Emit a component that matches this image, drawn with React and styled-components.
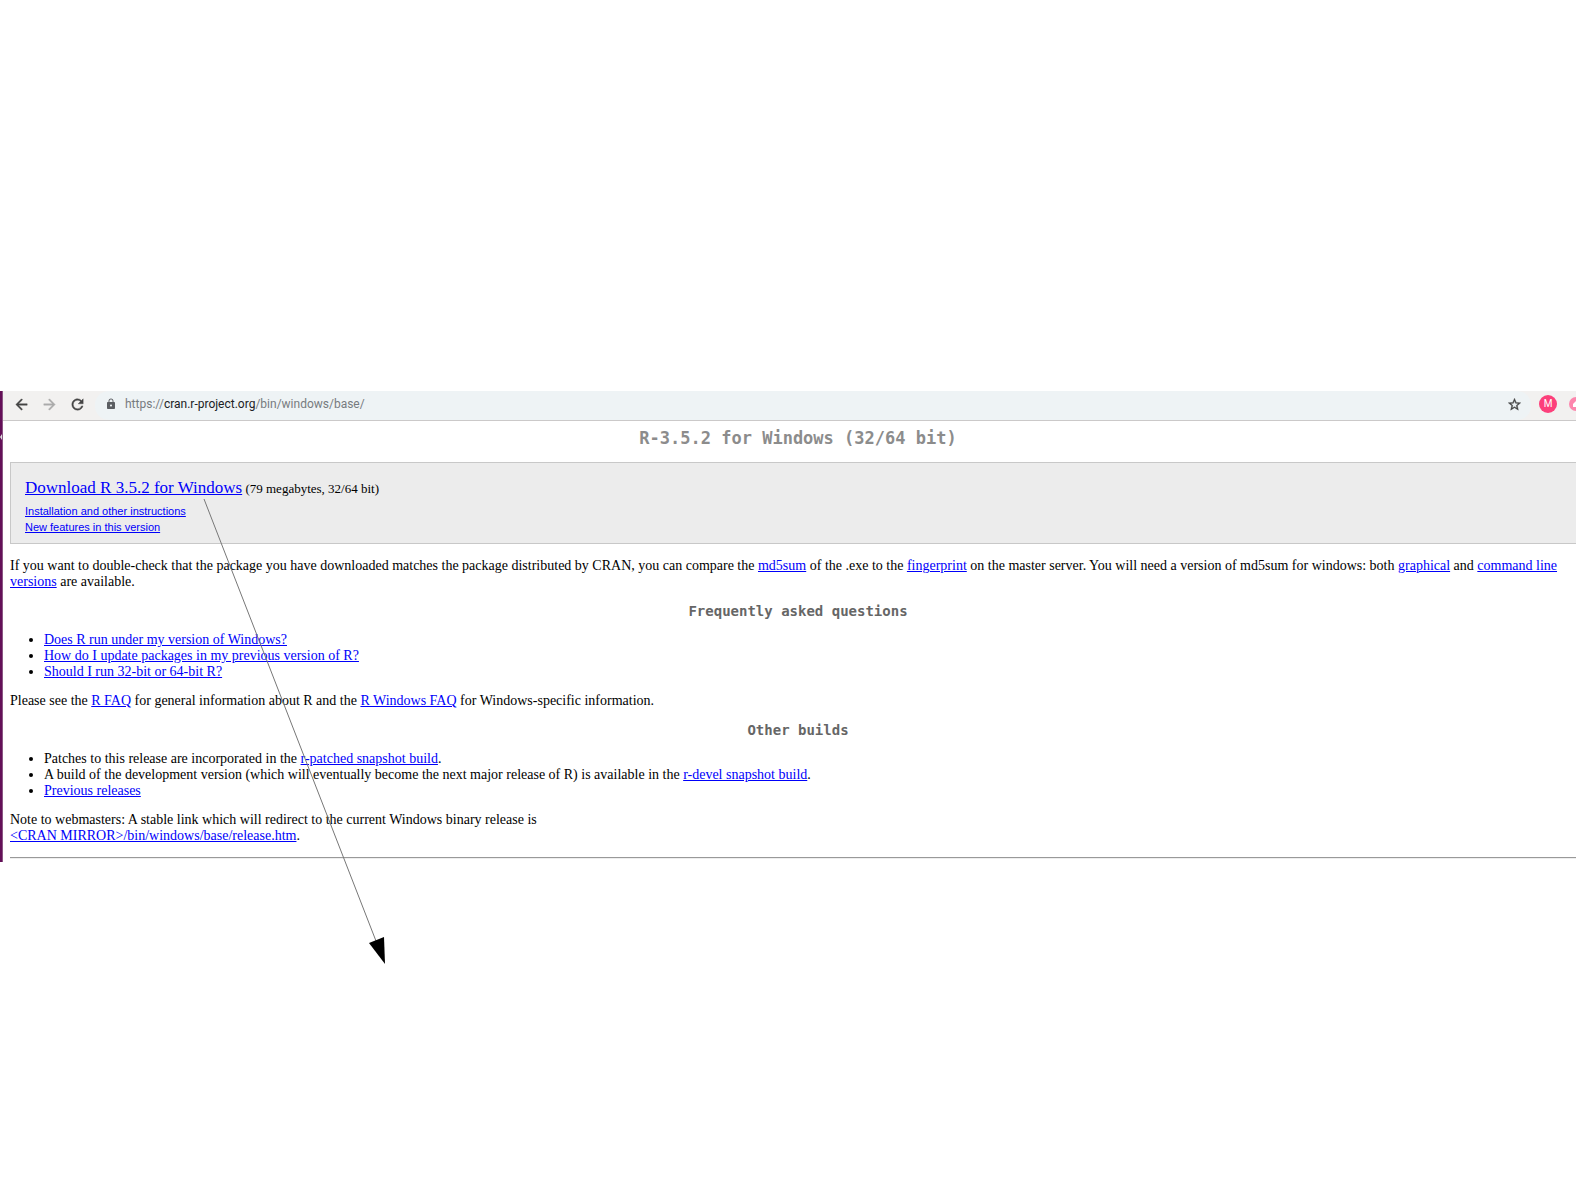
import styled, { createGlobalStyle } from "styled-components";
import {
  MdArrowBack,
  MdArrowForward,
  MdRefresh,
  MdLock,
  MdStarBorder,
} from "react-icons/md";

const GlobalStyle = createGlobalStyle`
  body {
    margin: 0;
    background: #fff;
    color: #000;
    font-family: "Liberation Serif", "Times New Roman", serif;
    font-size: 14px;
    line-height: 16px;
  }
  a {
    color: #0000fa;
  }
`;

//LAYOUT
const Slide = styled.div`
  position: relative;
  min-height: 100vh;
  box-sizing: border-box;
  padding: 391px 11px 0 0;
`;

const BrowserWindow = styled.div`
  display: flex;
  overflow: hidden;
`;

const DesktopEdge = styled.div`
  flex: none;
  width: 3px;
  box-sizing: border-box;
  padding-top: 43px;
  background: #640f58;
  border-right: 1px solid #8a5583;
  & svg {
    display: block;
  }
`;

const Viewport = styled.div`
  flex: 1;
  min-width: 0;
`;

//TOOLBAR
const Toolbar = styled.div`
  display: flex;
  align-items: center;
  height: 29px;
  padding-left: 10px;
  background: #f2f1f0;
  border-bottom: 1px solid #cbc9c9;
`;

const IconButton = styled.button`
  display: flex;
  padding: 0;
  margin: 0 ${(props) => props.$gap || 0}px 3px 0;
  border: 0;
  background: none;
  color: ${(props) => props.$color || "#444"};
  & path:not([fill="none"]) {
    stroke: currentColor;
    stroke-width: 0.6;
  }
  & path[fill="none"] {
    stroke: none;
  }
`;

const AddressBar = styled.div`
  flex: 1;
  display: flex;
  align-items: center;
  height: 29px;
  box-sizing: border-box;
  padding: 0 9px 0 10px;
  border-radius: 14px;
  background: #eef3f5;
  color: #5b5e62;
  & > svg {
    margin-bottom: 4px;
  }
`;

const Address = styled.a`
  flex: 1;
  padding: 0 0 3px 8px;
  font-family: Roboto, sans-serif;
  font-size: 12px;
  && {
    color: #777b7f;
    text-decoration: none;
  }
  & span {
    color: #202124;
  }
`;

const Profile = styled.button`
  width: 18px;
  height: 18px;
  padding: 0;
  margin: 0 12px 4px 8px;
  border: 0;
  border-radius: 50%;
  background: #fc407b;
  color: #fff;
  font: 10px/18px Roboto, sans-serif;
`;

const ExtensionClip = styled.button`
  width: 7px;
  height: 14px;
  padding: 0;
  margin-bottom: 4px;
  border: 0;
  background: none;
  & svg {
    display: block;
  }
`;

//PAGE CONTENT
//The page is a little wider than the window, its right edge is cut off.
const Content = styled.main`
  margin: 7px -10px 0 7px;
`;

const Title = styled.h1`
  margin: 0 0 14px;
  color: #8c8c8c;
  font: bold 17px/20px "DejaVu Sans Mono", monospace;
  text-align: center;
`;

const Heading = styled.h2`
  margin: 13px 0;
  color: #666;
  font: bold 14px/16px "DejaVu Sans Mono", monospace;
  text-align: center;
`;

const DownloadBox = styled.section`
  margin-bottom: 14px;
  padding: 15px 14px 8px;
  border: 1px solid #c8c8c8;
  background: #ececec;
`;

const DownloadLine = styled.p`
  margin: 0 0 4px;
  font-size: 13px;
  line-height: 20px;
  & a {
    font-size: 17px;
  }
`;

const SmallLink = styled.a`
  display: table;
  font: 11px/16px "Liberation Sans", Arial, sans-serif;
`;

const Paragraph = styled.p`
  margin: 13px 0;
`;

const List = styled.ul`
  margin: 13px 0;
  padding-left: 34px;
`;

const Rule = styled.hr`
  margin: 13px 0 3px;
  border: 0;
  border-top: 1px solid #999;
  border-bottom: 1px solid #eee;
`;

const Arrow = styled.svg`
  position: absolute;
  top: 498px;
  left: 203px;
  pointer-events: none;
`;

const BrowserToolbar = () => (
  <Toolbar>
    <IconButton aria-label="Back" $gap={11}>
      <MdArrowBack size={17} />
    </IconButton>
    <IconButton aria-label="Forward" $gap={11} $color="#aaa">
      <MdArrowForward size={17} />
    </IconButton>
    <IconButton aria-label="Reload" $gap={9}>
      <MdRefresh size={17} />
    </IconButton>
    <AddressBar>
      <MdLock size={12} />
      <Address href="#base">
        https://<span>cran.r-project.org</span>/bin/windows/base/
      </Address>
      <IconButton aria-label="Bookmark">
        <MdStarBorder size={15} />
      </IconButton>
    </AddressBar>
    <Profile>M</Profile>
    <ExtensionClip aria-label="Extension">
      <svg width="7" height="14">
        <circle cx="7" cy="7" r="7" fill="#fd86ad" />
        <path d="M7 4 L4 7 V10 H7Z" fill="#fff" />
      </svg>
    </ExtensionClip>
  </Toolbar>
);

const App = () => {
  return (
    <Slide>
      <GlobalStyle />
      <BrowserWindow>
        <DesktopEdge>
          <svg width="2" height="6">
            <path d="M2 0 V6 L0 3Z" fill="#ddd" />
          </svg>
        </DesktopEdge>
        <Viewport>
          <BrowserToolbar />
          <Content>
            <Title>R-3.5.2 for Windows (32/64 bit)</Title>
            <DownloadBox>
              <DownloadLine>
                <a href="#download">Download R 3.5.2 for Windows</a> (79
                megabytes, 32/64 bit)
              </DownloadLine>
              <SmallLink href="#install">
                Installation and other instructions
              </SmallLink>
              <SmallLink href="#news">New features in this version</SmallLink>
            </DownloadBox>
            <Paragraph>
              If you want to double-check that the package you have downloaded
              matches the package distributed by CRAN, you can compare the{" "}
              <a href="#md5sum">md5sum</a> of the .exe to the{" "}
              <a href="#fingerprint">fingerprint</a> on the master server. You
              will need a version of md5sum for windows: both{" "}
              <a href="#graphical">graphical</a> and{" "}
              <a href="#cli">command line versions</a> are available.
            </Paragraph>
            <Heading>Frequently asked questions</Heading>
            <List>
              <li>
                <a href="#version">Does R run under my version of Windows?</a>
              </li>
              <li>
                <a href="#update">
                  How do I update packages in my previous version of R?
                </a>
              </li>
              <li>
                <a href="#bits">Should I run 32-bit or 64-bit R?</a>
              </li>
            </List>
            <Paragraph>
              Please see the <a href="#faq">R FAQ</a> for general information
              about R and the <a href="#winfaq">R Windows FAQ</a> for
              Windows-specific information.
            </Paragraph>
            <Heading>Other builds</Heading>
            <List>
              <li>
                Patches to this release are incorporated in the{" "}
                <a href="#patched">r-patched snapshot build</a>.
              </li>
              <li>
                A build of the development version (which will eventually
                become the next major release of R) is available in the{" "}
                <a href="#devel">r-devel snapshot build</a>.
              </li>
              <li>
                <a href="#previous">Previous releases</a>
              </li>
            </List>
            <Paragraph>
              Note to webmasters: A stable link which will redirect to the
              current Windows binary release is
              <br />
              <a href="#release">
                &lt;CRAN MIRROR&gt;/bin/windows/base/release.htm
              </a>
              .
            </Paragraph>
            <Rule />
          </Content>
        </Viewport>
      </BrowserWindow>
      {/* Pointer from the download link to whatever sits below the window */}
      <Arrow width="186" height="468">
        <path d="M1 1 L173 443" stroke="#777" strokeWidth="1" />
        <path d="M166 445 L181 439 L182 466Z" fill="#000" />
      </Arrow>
    </Slide>
  );
};

export default App;
